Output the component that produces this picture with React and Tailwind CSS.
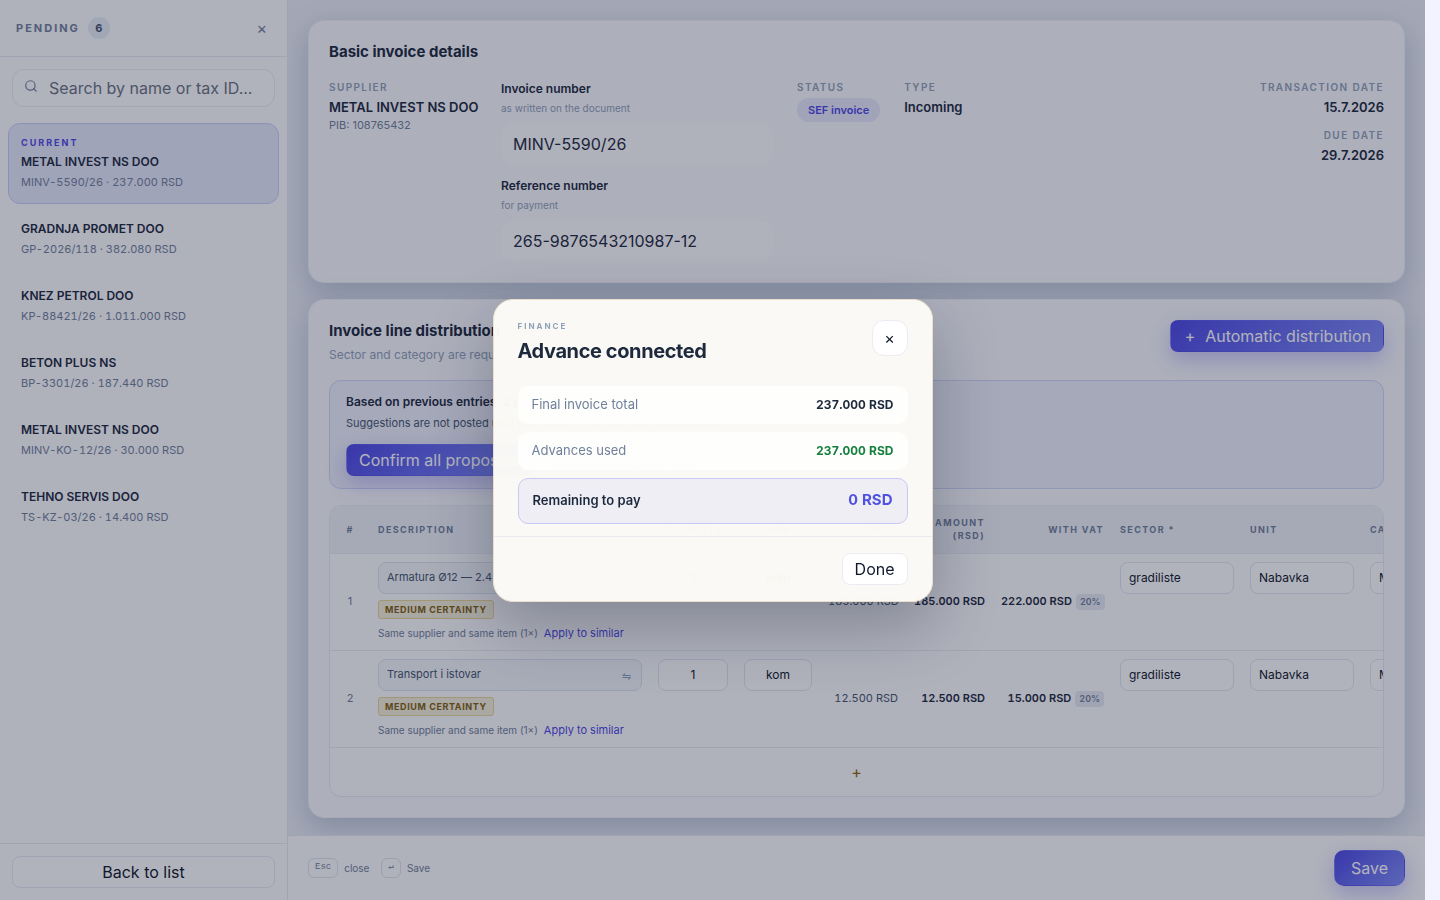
import React from 'react';
import { FiSearch } from 'react-icons/fi';

const pending = [
  { name: 'METAL INVEST NS DOO', meta: 'MINV-5590/26 · 237.000 RSD', current: true },
  { name: 'GRADNJA PROMET DOO', meta: 'GP-2026/118 · 382.080 RSD' },
  { name: 'KNEZ PETROL DOO', meta: 'KP-88421/26 · 1.011.000 RSD' },
  { name: 'BETON PLUS NS', meta: 'BP-3301/26 · 187.440 RSD' },
  { name: 'METAL INVEST NS DOO', meta: 'MINV-KO-12/26 · 30.000 RSD' },
  { name: 'TEHNO SERVIS DOO', meta: 'TS-KZ-03/26 · 14.400 RSD' },
];

const lines = [
  { id: 1, description: 'Armatura Ø12 — 2.4 t', qty: '1', uom: 'kom', price: '185.000 RSD', amount: '185.000 RSD', total: '222.000 RSD' },
  { id: 2, description: 'Transport i istovar', qty: '1', uom: 'kom', price: '12.500 RSD', amount: '12.500 RSD', total: '15.000 RSD' },
];

const primary =
  'border border-transparent bg-linear-135 from-[#4f46e5] to-[#818cf8] text-base text-white shadow-[0_8px_20px_rgba(79,70,229,0.28)]';
const cellInput =
  'block h-8 w-full rounded-lg border border-[#e2e4f0] bg-white text-[12px] text-slate-900 outline-none';
const card =
  'rounded-2xl border border-[#f0f1f6] bg-[#f9fafd] p-5 shadow-[0_10px_30px_rgba(50,75,120,0.28)]';

const Sidebar = () => (
  <aside className="flex w-72 shrink-0 flex-col border-r border-[#e6e8f1] bg-[#fcfcfe]">
    <div className="flex h-[57px] items-center border-b border-[#e8eaf2] px-4">
      <h2 className="text-[11px] font-bold tracking-[2px] text-[#71809a]">PENDING</h2>
      <span className="ml-2 flex h-[22px] w-[22px] items-center justify-center rounded-full bg-[#e9eef5] text-[11px] font-bold text-slate-600">
        6
      </span>
      <button type="button" aria-label="Close list" className="ml-auto px-1 text-base text-[#71809a]">
        ×
      </button>
    </div>

    <div className="relative m-3 mb-4">
      <FiSearch size={14} className="absolute top-[10px] left-3 text-[#71809a]" />
      <input
        type="text"
        aria-label="Search pending invoices"
        placeholder="Search by name or tax ID..."
        className="block h-[38px] w-full rounded-xl border border-[#eceaf3] bg-white pr-2 pl-9 text-base outline-none placeholder:text-gray-500"
      />
    </div>

    <ul className="flex flex-1 flex-col gap-1 overflow-hidden px-2">
      {pending.map((item) => (
        <li key={item.meta}>
          <button
            type="button"
            className={
              item.current
                ? 'block w-full rounded-xl border border-[#c7cdf9] bg-[#e6e9fb] p-3 text-left'
                : 'block w-full rounded-xl border border-transparent p-3 text-left'
            }
          >
            {item.current && (
              <span className="mb-1 block text-[9px] leading-[14px] font-bold tracking-[2px] text-[#4f46e5]">CURRENT</span>
            )}
            <span className="block text-[12px] leading-4 font-semibold text-slate-800">{item.name}</span>
            <span className="mt-[3px] block text-[11px] leading-[18px] text-[#71809a] tabular-nums">{item.meta}</span>
          </button>
        </li>
      ))}
    </ul>

    <div className="border-t border-[#e8eaf2] p-3">
      <button type="button" className="h-8 w-full rounded-lg border border-[#e8e9f2] bg-white text-base leading-6 text-slate-900">
        Back to list
      </button>
    </div>
  </aside>
);

const Caption = ({ children }) => (
  <div className="text-[10px] leading-[14px] font-semibold tracking-[1.4px] text-slate-400 uppercase">{children}</div>
);

const NumberField = ({ id, label, hint, value }) => (
  <div>
    <label htmlFor={id} className="block text-[12px] leading-[18px] font-semibold text-slate-800">
      {label}
    </label>
    <p className="mt-0.5 mb-2 text-[10px] leading-4 text-slate-400">{hint}</p>
    <input
      id={id}
      type="text"
      defaultValue={value}
      className="block h-10 w-full rounded-xl bg-[#fdfdfe] px-3 text-base text-slate-800 outline-none"
    />
  </div>
);

const InvoiceDetails = () => (
  <section className={card}>
    <h2 className="text-[15px] leading-[22px] font-bold text-slate-800">Basic invoice details</h2>
    <div className="mt-[17px] flex items-start gap-6">
      <div className="w-[148px] whitespace-nowrap">
        <Caption>Supplier</Caption>
        <div className="mt-1 text-[13px] leading-[18px] font-semibold text-slate-800">METAL INVEST NS DOO</div>
        <div className="text-[11px] leading-[18px] text-[#71809a]">PIB: 108765432</div>
      </div>
      <div className="flex w-[272px] flex-col gap-[13px] pb-px">
        <NumberField id="invoice-number" label="Invoice number" hint="as written on the document" value="MINV-5590/26" />
        <NumberField id="reference-number" label="Reference number" hint="for payment" value="265-9876543210987-12" />
      </div>
      <div>
        <Caption>Status</Caption>
        <div className="mt-1 rounded-full bg-[#e7e8fb] px-[11px] text-[11px] leading-6 font-semibold text-[#4f46e5]">SEF invoice</div>
      </div>
      <div>
        <Caption>Type</Caption>
        <div className="mt-1 text-[13px] leading-[18px] font-semibold text-slate-800">Incoming</div>
      </div>
      <div className="ml-auto text-right">
        <Caption>Transaction date</Caption>
        <div className="mt-1 mb-3 text-[13px] leading-[18px] font-semibold text-slate-800">15.7.2026</div>
        <Caption>Due date</Caption>
        <div className="mt-1 text-[13px] leading-[18px] font-semibold text-slate-800">29.7.2026</div>
      </div>
    </div>
  </section>
);

const LinesTable = () => (
  <div className="mt-4 overflow-hidden rounded-xl border border-[#e8e9f2] bg-[#fcfcfe]">
    <div className="overflow-x-auto [scrollbar-width:none]">
      <table className="w-[1180px] min-w-full table-fixed border-collapse">
        <colgroup>
          <col className="w-[40px]" />
          <col className="w-[280px]" />
          <col className="w-[86px]" />
          <col className="w-[84px]" />
          <col className="w-[86px]" />
          <col className="w-[87px]" />
          <col className="w-[119px]" />
          <col className="w-[130px]" />
          <col className="w-[120px]" />
          <col />
        </colgroup>
        <thead>
          <tr className="h-[47px] border-b border-[#e8eaf2] bg-[#eff2f8] text-[9px] leading-[13px] tracking-[1.4px] text-[#71809a] [&>th]:px-2 [&>th]:font-bold">
            <th>#</th>
            <th className="text-left">DESCRIPTION</th>
            <th>QUANTITY</th>
            <th>UOM</th>
            <th className="text-right">PRICE</th>
            <th className="text-right">AMOUNT (RSD)</th>
            <th className="text-right">WITH VAT</th>
            <th className="text-left">SECTOR *</th>
            <th className="text-left">UNIT</th>
            <th className="text-left">CATEGORY *</th>
          </tr>
        </thead>
        <tbody>
          {lines.map((line) => (
            <tr key={line.id} className="border-b border-[#e8eaf2] text-[11px] text-slate-800 [&>td]:p-2">
              <td className="text-center text-[#71809a]">{line.id}</td>
              <td>
                <button
                  type="button"
                  className="flex h-8 w-full items-center justify-between rounded-lg border border-[#dbe1ec] bg-[#f3f6fa] px-2 text-left text-slate-600"
                >
                  {line.description}
                  <span className="pt-1 pr-0.5 text-slate-400">⇋</span>
                </button>
                <span className="mt-1.5 block w-fit rounded-[3px] border border-[#e8d595] bg-[#f5efd8] px-1.5 text-[9px] leading-[17px] font-bold tracking-[0.6px] text-[#80600f]">
                  MEDIUM CERTAINTY
                </span>
                <div className="mt-[5px] flex items-center gap-1.5 leading-[18px]">
                  <span className="text-[10px] text-[#71809a]">Same supplier and same item (1×)</span>
                  <button type="button" className="text-[11px] text-[#4f46e5]">
                    Apply to similar
                  </button>
                </div>
              </td>
              <td className="align-top">
                <input type="text" aria-label="Quantity" defaultValue={line.qty} className={`${cellInput} text-center`} />
              </td>
              <td className="align-top">
                <input type="text" aria-label="Unit of measure" defaultValue={line.uom} className={`${cellInput} text-center`} />
              </td>
              <td className="text-right whitespace-nowrap text-slate-600 tabular-nums">{line.price}</td>
              <td className="text-right font-semibold whitespace-nowrap tabular-nums">{line.amount}</td>
              <td className="text-right font-semibold whitespace-nowrap tabular-nums">
                {line.total}
                <span className="ml-1 inline-block rounded-sm bg-[#e8ebf2] px-1 text-[9px] leading-4 text-[#71809a]">20%</span>
              </td>
              <td className="align-top">
                <input type="text" aria-label="Sector" defaultValue="gradiliste" className={`${cellInput} px-2`} />
              </td>
              <td className="align-top">
                <input type="text" aria-label="Unit" defaultValue="Nabavka" className={`${cellInput} px-2`} />
              </td>
              <td className="align-top">
                <input type="text" aria-label="Category" defaultValue="Materijal" className={`${cellInput} px-2`} />
              </td>
            </tr>
          ))}
        </tbody>
      </table>
    </div>
    <button type="button" aria-label="Add line" className="block h-12 w-full text-base text-[#92610a]">
      +
    </button>
  </div>
);

const LineDistribution = () => (
  <section className={card}>
    <div className="flex items-start justify-between">
      <div>
        <h2 className="text-[15px] leading-[22px] font-bold text-slate-800">Invoice line distribution</h2>
        <p className="mt-1 text-[12px] leading-[18px] text-slate-400">Sector and category are required for each line.</p>
      </div>
      <button type="button" className={`${primary} flex h-8 items-center rounded-lg px-3`}>
        <span className="mr-2 w-[14px] text-center">+</span>
        Automatic distribution
      </button>
    </div>

    <div className="mt-4 rounded-xl border border-[#d0d5f8] bg-[#eef0fb] px-4 py-3">
      <p className="text-[12px] leading-[18px] font-semibold text-slate-800">Based on previous entries: 2 proposals</p>
      <p className="mt-[3px] text-[11px] leading-[18px] text-slate-600">
        Suggestions are not posted until you confirm. You can edit individual lines.
      </p>
      <div className="mt-3 flex gap-2">
        <button type="button" className={`${primary} h-8 rounded-lg px-3 leading-6`}>
          Confirm all proposals
        </button>
        <button type="button" className="h-8 rounded-lg px-3 text-base text-slate-800">
          Reject suggestions
        </button>
      </div>
    </div>

    <LinesTable />
  </section>
);

const kbd = 'flex h-5 items-start justify-center rounded-md border border-[#dfe2ec] px-1.5 font-["Liberation_Mono",monospace] text-[9px] leading-4';

const FooterBar = () => (
  <footer className="flex shrink-0 items-center border-t border-[#e4e6ef] bg-[#fcfcfe] px-5 py-[14px]">
    <div className="flex items-center text-[10px] text-[#71809a]">
      <kbd className={kbd}>Esc</kbd>
      <span className="mr-3 ml-1.5">close</span>
      <kbd className={kbd}>↵</kbd>
      <span className="ml-1.5">Save</span>
    </div>
    <button type="button" className={`${primary} ml-auto h-9 rounded-[10px] px-4`}>
      Save
    </button>
  </footer>
);

const AdvanceModal = () => (
  <div className="fixed inset-y-0 right-[15px] left-0 flex items-center justify-center bg-[rgba(18,25,52,0.33)]">
    <div
      role="dialog"
      aria-labelledby="advance-title"
      className="w-[440px] rounded-[20px] border border-[#eadfce] bg-[#fcfaf6]/98 shadow-[0_24px_64px_rgba(15,23,42,0.28)]"
    >
      <div className="flex items-start justify-between px-6 pt-5">
        <div>
          <div className="text-[8px] leading-3 font-bold tracking-[2px] text-slate-400">FINANCE</div>
          <h2 id="advance-title" className="mt-1.5 text-[20px] leading-[26px] font-bold tracking-[-0.4px] text-slate-800">
            Advance connected
          </h2>
        </div>
        <button type="button" aria-label="Close" className="h-9 w-9 rounded-xl border border-[#eceaf3] bg-white text-base text-slate-900">
          ×
        </button>
      </div>
      <div className="flex flex-col gap-2 px-6 pt-[22px] pb-3">
        <div className="flex h-[38px] items-center justify-between rounded-[10px] bg-white/75 px-[14px] text-[13px]">
          <span className="text-[#71809a]">Final invoice total</span>
          <span className="text-[12px] font-bold text-slate-800 tabular-nums">237.000 RSD</span>
        </div>
        <div className="flex h-[38px] items-center justify-between rounded-[10px] bg-white/75 px-[14px] text-[13px]">
          <span className="text-[#71809a]">Advances used</span>
          <span className="text-[12px] font-bold text-[#15803d] tabular-nums">237.000 RSD</span>
        </div>
        <div className="flex h-[46px] items-center justify-between rounded-[10px] border border-[#c7c8f5] bg-[#efeef4] px-[14px] text-[13px] font-semibold">
          <span className="text-slate-800">Remaining to pay</span>
          <span className="text-[15px] font-bold text-[#4f52e0] tabular-nums">0 RSD</span>
        </div>
      </div>
      <div className="flex justify-end border-t border-[#e9eaf0] px-6 py-4">
        <button type="button" className="h-8 rounded-lg border border-[#eceaf3] bg-white px-3 text-base leading-6 text-slate-900">
          Done
        </button>
      </div>
    </div>
  </div>
);

const App = () => (
  <div className="h-screen bg-[#f3f3ff] pr-[15px] font-['Inter',sans-serif]">
    <div className="flex h-full overflow-hidden bg-[#ebeff6]">
      <Sidebar />
      <div className="flex min-w-0 flex-1 flex-col">
        <main className="flex min-h-0 flex-1 flex-col gap-4 overflow-hidden p-5 pb-4">
          <InvoiceDetails />
          <LineDistribution />
        </main>
        <FooterBar />
      </div>
    </div>
    <AdvanceModal />
  </div>
);

export default App;
